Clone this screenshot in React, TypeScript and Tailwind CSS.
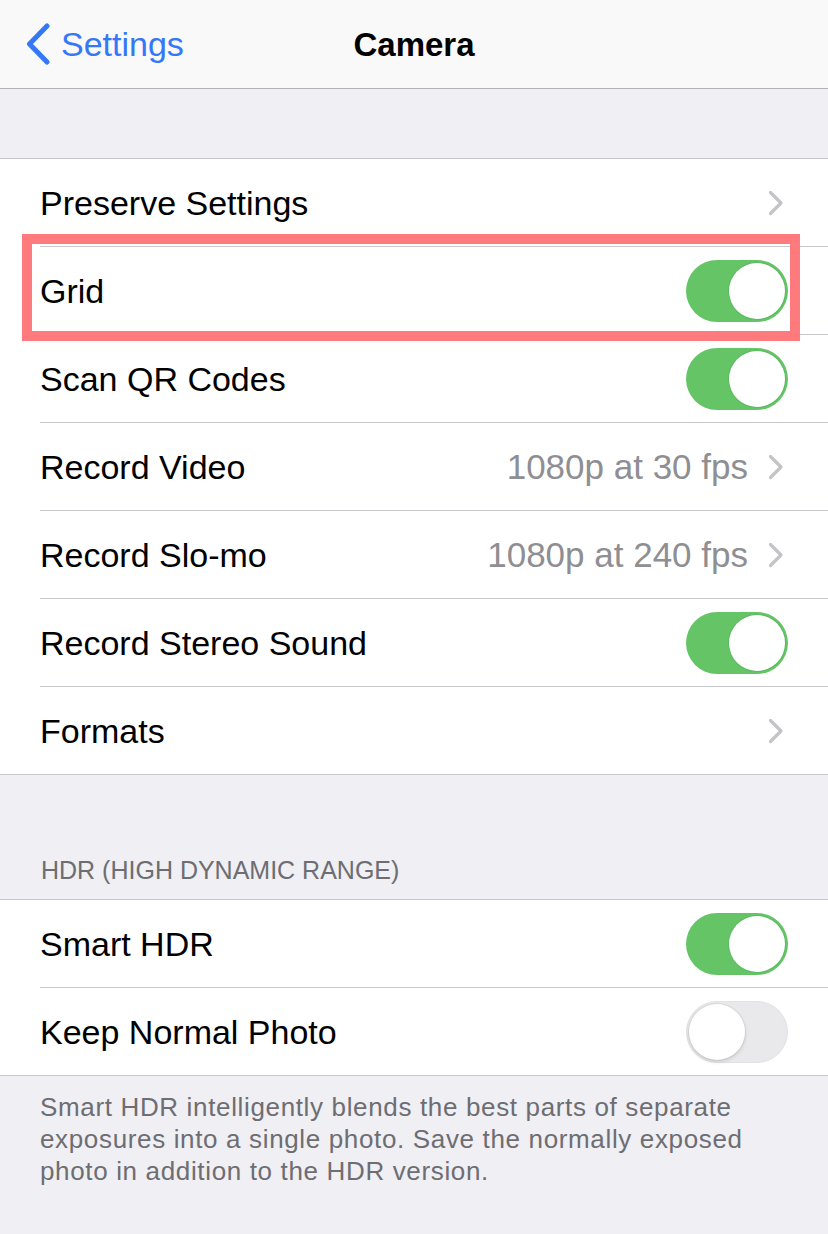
import React from "react";

type Row =
  | { label: string; kind: "link"; value?: string }
  | { label: string; kind: "toggle"; on: boolean; marked?: boolean };

const CAMERA_ROWS: Row[] = [
  { label: "Preserve Settings", kind: "link" },
  { label: "Grid", kind: "toggle", on: true, marked: true },
  { label: "Scan QR Codes", kind: "toggle", on: true },
  { label: "Record Video", kind: "link", value: "1080p at 30 fps" },
  { label: "Record Slo-mo", kind: "link", value: "1080p at 240 fps" },
  { label: "Record Stereo Sound", kind: "toggle", on: true },
  { label: "Formats", kind: "link" },
];

const HDR_ROWS: Row[] = [
  { label: "Smart HDR", kind: "toggle", on: true },
  { label: "Keep Normal Photo", kind: "toggle", on: false },
];

function Chevron() {
  return (
    <svg width="16" height="26" viewBox="0 0 16 26" className="shrink-0">
      <path d="M2.5 2.5 L13 13 L2.5 23.5" fill="none" stroke="#c4c4c7" strokeWidth="3.2" strokeLinecap="round" strokeLinejoin="round" />
    </svg>
  );
}

function Toggle({ on }: { on: boolean }) {
  return (
    <div
      className={
        on
          ? "relative w-[102px] h-[62px] rounded-full bg-[#64c466] shrink-0"
          : "relative w-[102px] h-[62px] rounded-full bg-[#e9e9eb] border border-[#e2e2e4] shrink-0"
      }
    >
      <div
        className={
          on
            ? "absolute top-[3px] right-[3px] w-[56px] h-[56px] rounded-full bg-white shadow-[0_0_0_1px_rgba(80,170,90,0.35)]"
            : "absolute top-[2px] left-[2px] w-[56px] h-[56px] rounded-full bg-white shadow-[0_2px_4px_rgba(0,0,0,0.12),0_0_0_1px_rgba(0,0,0,0.06)]"
        }
      />
    </div>
  );
}

function SettingsRow({ row, last }: { row: Row; last: boolean }) {
  return (
    <div className="relative w-full bg-white">
      <div className={last ? "ml-[40px] h-[87px] flex items-center" : "ml-[40px] h-[88px] flex items-center border-b border-[#c8c7cc]"}>
        <span className="flex-1 text-[34px] text-black leading-none">{row.label}</span>
        {row.kind === "link" ? (
          <div className="flex items-center gap-[20px] pr-[44px]">
            {row.value && <span className="text-[35px] text-[#8e8e93] leading-none">{row.value}</span>}
            <Chevron />
          </div>
        ) : (
          <div className="pr-[40px]">
            <Toggle on={row.on} />
          </div>
        )}
      </div>
      {/* red highlight frame drawn over the row */}
      {row.kind === "toggle" && row.marked && (
        <div className="absolute z-10 -top-[13px] left-[22px] w-[778px] h-[107px] border-[10px] border-[#ff7a7c]" />
      )}
    </div>
  );
}

function Group({ rows }: { rows: Row[] }) {
  return (
    <div className="border-y border-[#c8c7cc] bg-white">
      {rows.map((r, i) => (
        <SettingsRow key={r.label} row={r} last={i === rows.length - 1} />
      ))}
    </div>
  );
}

export default function App() {
  return (
    <div className="w-[828px] min-h-[1234px] bg-[#efeff4] font-['Liberation_Sans',Arial,sans-serif] antialiased">
      {/* nav bar */}
      <div className="h-[89px] bg-[#f9f9f9] border-b border-[#b3b3b3] grid grid-cols-[1fr_auto_1fr] items-center">
        <div className="flex items-center pl-[26px] gap-[11px] text-[#3478f6]">
          <svg width="24" height="42" viewBox="0 0 24 42">
            <path d="M21 3 L3.5 21 L21 39" fill="none" stroke="#3478f6" strokeWidth="5" strokeLinecap="round" strokeLinejoin="round" />
          </svg>
          <span className="text-[34px] leading-none">Settings</span>
        </div>
        <span className="text-[33px] font-bold text-black leading-none">Camera</span>
        <div />
      </div>

      <div className="h-[69px]" />
      <Group rows={CAMERA_ROWS} />

      <div className="h-[124px] flex items-end px-[41px] pb-[16px]">
        <span className="text-[25px] text-[#6d6d72] leading-none">HDR (HIGH DYNAMIC RANGE)</span>
      </div>
      <Group rows={HDR_ROWS} />

      <p className="px-[40px] pt-[15px] text-[26px] leading-[32px] tracking-[0.65px] text-[#6d6d72]">
        Smart HDR intelligently blends the best parts of separate
        <br />
        exposures into a single photo. Save the normally exposed
        <br />
        photo in addition to the HDR version.
      </p>
    </div>
  );
}
